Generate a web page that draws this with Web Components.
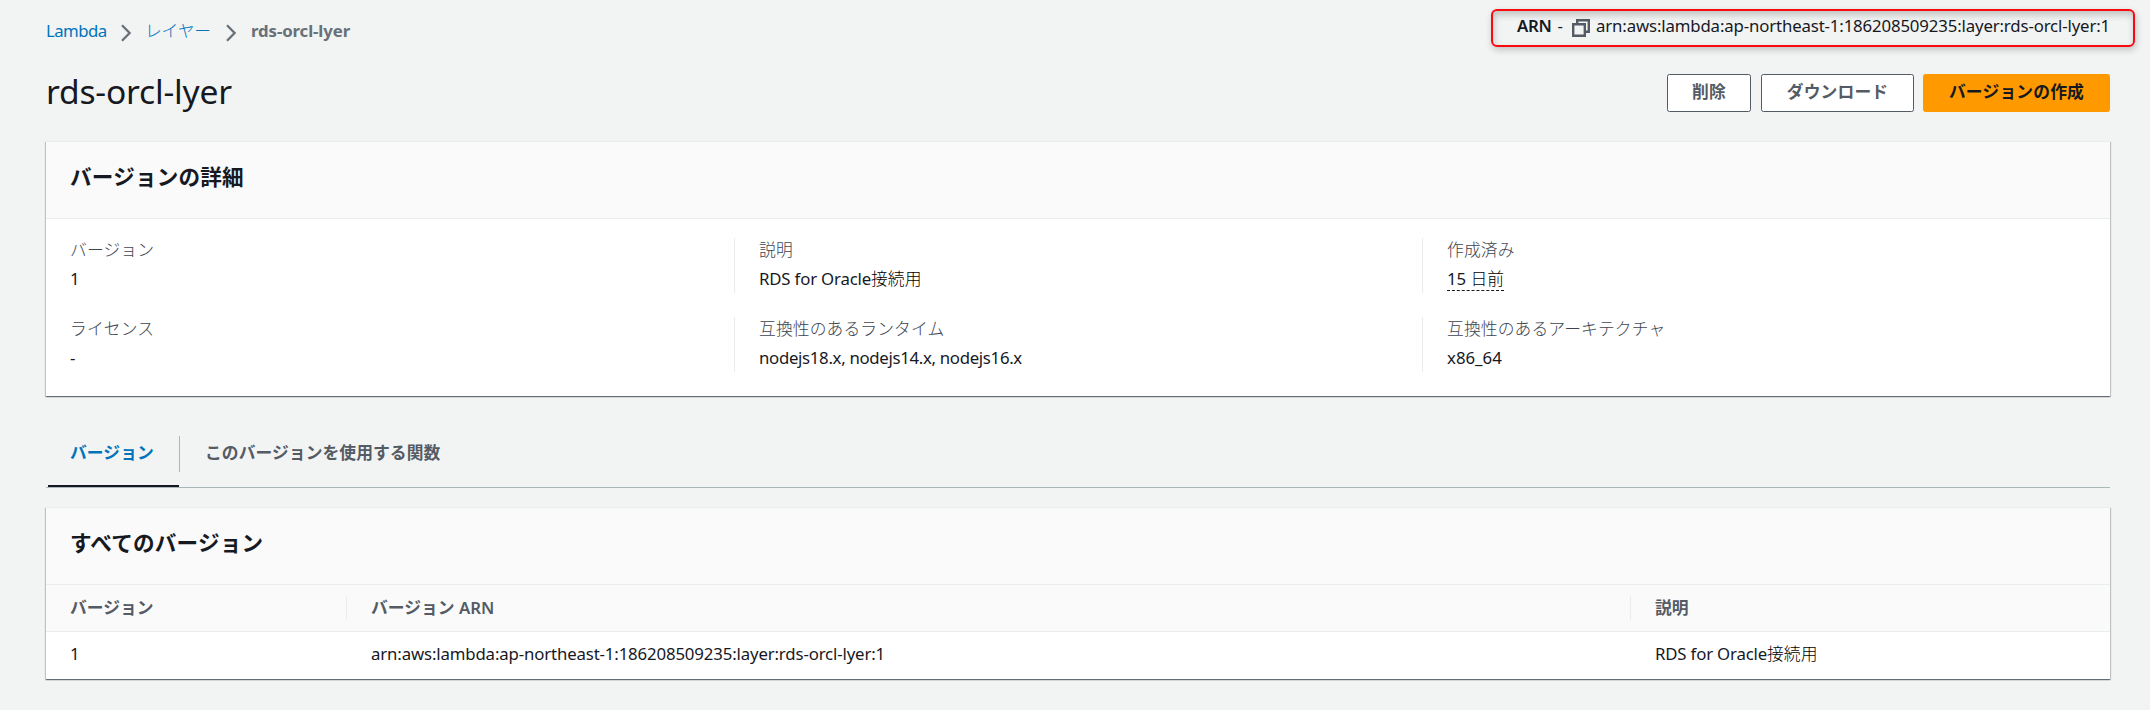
<!DOCTYPE html>
<html lang="ja">
<head>
<meta charset="utf-8">
<title>rds-orcl-lyer</title>
<style>
html, body { margin: 0; height: 100%; }
body {
  background: #f2f3f3; color: #16191f;
  font: 400 16.8px/26px "Noto Sans", "Noto Sans CJK JP", sans-serif;
  overflow: hidden;
}
</style>
</head>
<body>
<layer-page></layer-page>
<script>
const define = (name, html, init) => {
  const tpl = document.createElement('template');
  tpl.innerHTML = html;
  customElements.define(name, class extends HTMLElement {
    constructor() {
      super();
      this.attachShadow({ mode: 'open' }).append(tpl.content.cloneNode(true));
    }
    connectedCallback() { if (init) init.call(this, this.shadowRoot); }
  });
};

define('chevron-icon', `
<style>:host{display:block;width:10px;height:18px;margin-top:1px}svg{display:block}</style>
<svg width="10" height="18" viewBox="0 0 10 18" fill="none" stroke="#687078" stroke-width="2.3"><path d="M1 1.2 8.6 9 1 16.8"/></svg>`);

define('copy-icon', `
<style>:host{display:block;width:18px;height:18px}svg{display:block}</style>
<svg width="18" height="18" viewBox="0 0 18 18" fill="none" stroke="#545b64" stroke-width="2.4"><path d="M1.2 5.2h11.6v11.6H1.2z"/><path d="M5.2 5.2V1.2h11.6v11.6h-4"/></svg>`);

define('bread-crumbs', `
<style>
:host{display:flex;align-items:flex-start;line-height:26px;color:#0073bb}
a{color:inherit}
chevron-icon{margin-top:6px}
.a{width:61px;letter-spacing:-.55px;margin-right:14px}
.b{font-weight:300;width:67px;margin:0 14px 0 14px;letter-spacing:-.2px}
.c{font-weight:700;color:#687078;letter-spacing:-.1px;margin-left:15px}
</style>
<a class="a">Lambda</a><chevron-icon></chevron-icon><a class="b">レイヤー</a><chevron-icon></chevron-icon><span class="c">rds-orcl-lyer</span>`);

define('arn-label', `
<style>
:host{display:flex;position:relative;line-height:28px}
b{font-weight:600;letter-spacing:-.3px;white-space:pre}
.d{margin:0 9px 0 6px}
copy-icon{margin:7px 6px 0 0}
.v{width:514px;letter-spacing:-.14px;white-space:nowrap}
.frame{position:absolute;left:-26px;top:-3px;right:-25px;height:34px;border:2px solid #f80a0e;border-radius:6px;
 box-shadow:1px 3px 7px rgba(0,0,0,.2), inset 1px 4px 7px rgba(0,0,0,.2)}
</style>
<b>ARN</b><span class="d">-</span><copy-icon></copy-icon><span class="v"><slot></slot></span><div class="frame"></div>`);

define('aws-button', `
<style>
:host{display:flex;justify-content:center;box-sizing:border-box;height:38px;border:1px solid #545b64;border-radius:2.4px;
 background:#fff;color:#545b64;font-weight:600;line-height:33px;letter-spacing:.15px;white-space:nowrap}
:host([primary]){background:#f90;border-color:#f90;color:#16191f}
</style><slot></slot>`);

define('aws-panel', `
<style>
:host{display:block;background:#fff;border-top:1px solid #eaeded;
 box-shadow:0 1px 1px 0 rgba(10,24,36,.45), 1px 1px 1px 0 rgba(10,24,36,.16), -1px 1px 1px 0 rgba(10,24,36,.16)}
header{box-sizing:border-box;height:77px;padding:21px 24px 0;background:#fafafa;border-bottom:1px solid #eaeded}
h2{margin:0;font-size:21.6px;font-weight:600;line-height:28px;letter-spacing:.2px}
</style>
<header><h2></h2></header><slot></slot>`, function (root) {
  root.querySelector('h2').textContent = this.getAttribute('heading');
});

define('key-value', `
<style>
:host{display:block;box-sizing:border-box;height:55px;padding-left:24px}
:host([divided]){border-left:1px solid #eaeded}
.k{font-weight:300;color:#3e454f;line-height:24px;margin-bottom:4px;letter-spacing:.1px}
.v{line-height:26px}
</style><div class="k"></div><div class="v"><slot></slot></div>`, function (root) {
  root.querySelector('.k').textContent = this.getAttribute('label');
});

define('version-details', `
<style>
:host{display:grid;grid-template-columns:688px 688px 1fr;row-gap:24px;padding:19px 0 24px}
.ja{font-weight:300;color:#000}
.node{letter-spacing:-.31px}.rds{letter-spacing:-.17px}
.time{display:inline-block;line-height:22px;border-bottom:1px dashed #16191f}
</style>
<key-value label="バージョン">1</key-value>
<key-value divided label="説明"><span class="rds">RDS for Oracle</span><span class="ja">接続用</span></key-value>
<key-value divided label="作成済み"><span class="time">15 <span class="ja">日前</span></span></key-value>
<key-value label="ライセンス">-</key-value>
<key-value divided label="互換性のあるランタイム"><span class="node">nodejs18.x, nodejs14.x, nodejs16.x</span></key-value>
<key-value divided label="互換性のあるアーキテクチャ">x86_64</key-value>`);

define('tab-bar', `
<style>
:host{display:flex;height:51px;border-bottom:1px solid #aab7b8;font-weight:600;color:#545b64;line-height:34px;letter-spacing:.05px}
div{box-sizing:border-box;height:51px}
.on{width:131px;margin-left:2px;padding-left:22px;border-bottom:2px solid #16191f;color:#0073bb}
.off{padding-left:25px}
i{width:1px;height:36px;background:#aab7b8}
</style>
<div class="on">バージョン</div><i></i><div class="off">このバージョンを使用する関数</div>`);

define('version-table', `
<style>
:host{display:block}
.r{display:grid;grid-template-columns:300px 1284px 1fr}
.h{height:46px;align-items:center;background:#fafafa;border-bottom:1px solid #eaeded;font-weight:600;color:#545b64}
.h span{border-left:1px solid #eaeded;line-height:24px;padding-left:24px}
.h span:first-child{border-color:transparent;padding-left:23px}
.b{height:47px;line-height:44px}
.b>span{padding-left:25px}.b>span:first-child{padding-left:24px}
.arn{letter-spacing:-.14px}.rds{letter-spacing:-.17px}.ja{font-weight:300;color:#000}
</style>
<div class="r h"><span>バージョン</span><span>バージョン ARN</span><span>説明</span></div>
<div class="r b"><span>1</span><span class="arn">arn:aws:lambda:ap-northeast-1:186208509235:layer:rds-orcl-lyer:1</span><span><span class="rds">RDS for Oracle</span><span class="ja">接続用</span></span></div>`);

define('layer-page', `
<style>
:host{display:block;padding:0 40px 0 46px}
.top{display:flex;justify-content:space-between;height:74px;padding-top:12px;box-sizing:border-box}
bread-crumbs{margin-top:6px}
.title{display:flex;height:67px}
h1{margin:-4px auto 0 0;font-size:33.6px;font-weight:400;line-height:42px;letter-spacing:-.2px}
.del{width:84px;margin-right:10px}.dl{width:153px;margin-right:9px}.new{width:187px}
tab-bar{margin:40px 0 19px}
</style>
<div class="top"><bread-crumbs></bread-crumbs><arn-label>arn:aws:lambda:ap-northeast-1:186208509235:layer:rds-orcl-lyer:1</arn-label></div>
<div class="title"><h1>rds-orcl-lyer</h1><aws-button class="del">削除</aws-button><aws-button class="dl">ダウンロード</aws-button><aws-button class="new" primary>バージョンの作成</aws-button></div>
<aws-panel heading="バージョンの詳細"><version-details></version-details></aws-panel>
<tab-bar></tab-bar>
<aws-panel heading="すべてのバージョン"><version-table></version-table></aws-panel>`);
</script>
</body>
</html>
